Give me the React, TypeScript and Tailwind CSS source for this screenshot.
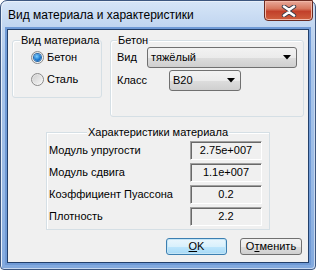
import React from "react";

const font = { fontFamily: '"Liberation Sans", Arial, sans-serif' };

function Radio({ checked, label }: { checked?: boolean; label: string }) {
  return (
    <div className="flex items-center gap-[3px] h-[13px]">
      <div className="w-[13px] h-[13px] rounded-full border border-[#8a8a8a] bg-[linear-gradient(135deg,#dcdcdc,#fbfbfb)] flex items-center justify-center">
        {checked ? (
          <div className="w-[7px] h-[7px] rounded-full bg-[radial-gradient(circle_at_40%_35%,#7fd0ff,#1b79d0_55%,#0a4f9c)] shadow-[0_0_0_1px_#2a6aa8]" />
        ) : (
          <div className="w-[9px] h-[9px] rounded-full bg-[linear-gradient(135deg,#d0d0d0,#f4f4f4)]" />
        )}
      </div>
      <span className="text-[11px] leading-[13px] text-black">{label}</span>
    </div>
  );
}

function Combo({ value, className }: { value: string; className: string }) {
  return (
    <div
      className={`flex items-center justify-between rounded-[3px] border border-[#707070] bg-[linear-gradient(#f2f2f2,#ebebeb_50%,#dddddd_51%,#cfcfcf)] pl-[3px] pr-[5px] ${className}`}
    >
      <span className="text-[11px] leading-none text-black">{value}</span>
      <svg width="8" height="5" viewBox="0 0 8 5">
        <path d="M0 0H8L4 4.5Z" fill="#000" />
      </svg>
    </div>
  );
}

function Group({ title, className, children, labelLeft }: { title: string; className: string; children: React.ReactNode; labelLeft: string }) {
  return (
    <div className={`relative border border-[#d5dfe5] rounded-[3px] shadow-[inset_1px_1px_0_#fff] ${className}`}>
      <span className={`absolute top-[-7px] ${labelLeft} bg-[#f0f0f0] px-[1px] text-[11px] leading-[13px] text-black`}>{title}</span>
      {children}
    </div>
  );
}

const props = [
  { label: "Модуль упругости", value: "2.75e+007" },
  { label: "Модуль сдвига", value: "1.1e+007" },
  { label: "Коэффициент Пуассона", value: "0.2" },
  { label: "Плотность", value: "2.2" },
];

export default function App() {
  return (
    <div className="w-[316px] h-[270px] bg-white" style={font}>
      <div className="w-full h-full flex flex-col border border-[#3d5780] rounded-t-[7px] rounded-b-[4px] bg-[linear-gradient(#d6e5f7,#c0d5f0_10%,#abc7eb_25%,#98b9e5_70%,#82a9de)] shadow-[inset_1px_1px_0_#e8f0fa,inset_-1px_-1px_0_#c8d9f0]">
        {/* title bar */}
        <div className="h-[28px] flex items-start pl-[7px]">
          <span className="mt-[7px] text-[12px] leading-[15px] text-black">
            Вид материала и характеристики
          </span>
          <div className="ml-auto mr-[2px] -mt-px w-[49px] h-[21px] rounded-b-[4px] border border-[#6b2b22] bg-[linear-gradient(#e9a99a,#d7785f_40%,#c2402a_55%,#cf5f3e)] flex items-center justify-center shadow-[inset_0_0_0_1px_#f1b8a8]">
            <svg width="16" height="12" viewBox="0 0 16 12">
              <path d="M3 1.5L8 5L13 1.5M3 10.5L8 7L13 10.5" stroke="#3d3d4a" strokeWidth="4.4" fill="none" strokeLinecap="round" />
              <path d="M3 1.5L8 5L13 1.5M3 10.5L8 7L13 10.5" stroke="#fff" strokeWidth="2.6" fill="none" strokeLinecap="round" />
            </svg>
          </div>
        </div>

        {/* client area */}
        <div className="flex-1 mx-[6px] mb-[6px] border border-[#23406b] bg-[#f0f0f0] shadow-[0_0_0_2px_#6f9ad6]">
          <div className="flex gap-[8px] pl-[4px] mt-[10px] items-start">
            <Group title="Вид материала" className="w-[90px] h-[58px]" labelLeft="left-[7px]">
              <div className="flex flex-col gap-[9px] pl-[18px] pt-[10px]">
                <Radio checked label="Бетон" />
                <Radio label="Сталь" />
              </div>
            </Group>
            <Group title="Бетон" className="w-[194px] h-[77px]" labelLeft="left-[6px]">
              <div className="flex flex-col gap-[2px] pl-[6px] pt-[6px]">
                <div className="flex items-center">
                  <span className="w-[30px] text-[11px] text-black">Вид</span>
                  <Combo value="тяжёлый" className="w-[150px] h-[21px]" />
                </div>
                <div className="flex items-center">
                  <span className="w-[52px] text-[11px] text-black">Класс</span>
                  <Combo value="B20" className="w-[72px] h-[21px]" />
                </div>
              </div>
            </Group>
          </div>

          <Group title="Характеристики материала" className="ml-[38px] mt-[15px] w-[224px] h-[98px] rounded-none" labelLeft="left-[40px]">
            <div className="flex flex-col gap-[3px] pl-[2px] pt-[8px]">
              {props.map((p) => (
                <div key={p.label} className="flex items-center">
                  <span className="w-[141px] text-[11px] text-black">{p.label}</span>
                  <div className="w-[72px] h-[19px] border border-t-[#a0a0a0] border-l-[#a0a0a0] border-b-white border-r-white shadow-[inset_1px_1px_0_#696969] flex items-center justify-center text-[11px] text-black">
                    {p.value}
                  </div>
                </div>
              ))}
            </div>
          </Group>

          <div className="flex justify-end gap-[13px] pr-[6px] mt-[8px]">
            <button className="w-[61px] h-[17px] rounded-[3px] border border-[#3c7fb1] bg-[linear-gradient(#eaf6fd,#d9f0fc_50%,#bee6fd_51%,#a7d9f5)] shadow-[inset_0_0_0_1px_#c4e5f6] text-[11px] leading-none text-black flex items-center justify-center">
              <span><span className="underline">O</span>K</span>
            </button>
            <button className="w-[62px] h-[17px] rounded-[3px] border border-[#707070] bg-[linear-gradient(#f2f2f2,#ebebeb_50%,#dddddd_51%,#cfcfcf)] text-[11px] leading-none text-black flex items-center justify-center">
              <span>О<span className="underline">т</span>менить</span>
            </button>
          </div>
        </div>
      </div>
    </div>
  );
}
